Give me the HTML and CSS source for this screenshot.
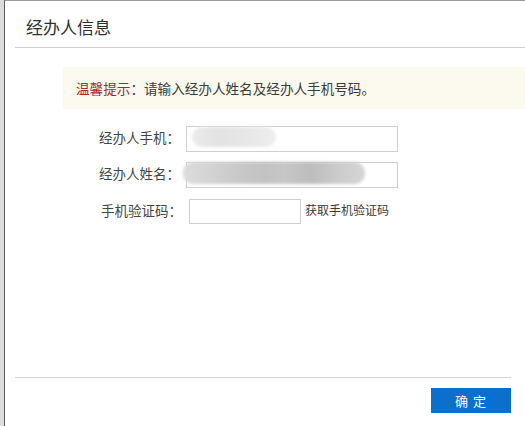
FILE: index.html
```html
<!DOCTYPE html>
<html lang="zh-CN">
<head>
    <meta charset="UTF-8">
    <meta name="viewport" content="width=device-width, initial-scale=1.0">
    <title>经办人信息</title>
    <link rel="stylesheet" href="styles.css">
</head>
<body>
    <!-- Dialog -->
    <div class="dialog">
        <div class="dialog-head">
            <h2>经办人信息</h2>
        </div>

        <div class="dialog-body">
            <!-- Notice -->
            <div class="tip">
                <span class="tip-title">温馨提示</span><span class="colon">：</span>请输入经办人姓名及经办人手机号码。
            </div>

            <!-- Form rows -->
            <div class="form">
                <div class="row">
                    <label>经办人手机<span class="colon">：</span></label>
                    <div class="field wide">
                        <input type="text">
                        <span class="mask mask-phone"></span>
                    </div>
                </div>
                <div class="row">
                    <label>经办人姓名<span class="colon">：</span></label>
                    <div class="field wide">
                        <input type="text">
                        <span class="mask mask-name"></span>
                    </div>
                </div>
                <div class="row row-code">
                    <label>手机验证码<span class="colon">：</span></label>
                    <div class="field short">
                        <input type="text">
                    </div>
                    <a class="get-code" href="#">获取手机验证码</a>
                </div>
            </div>
        </div>

        <div class="dialog-foot">
            <button class="btn-ok">确 定</button>
        </div>
    </div>
</body>
</html>
```

FILE: styles.css
```css
html, body {
    margin: 0;
    height: 100%;
}
body {
    font-family: "Noto Sans CJK SC", "Liberation Sans", sans-serif;
    background: #dcdcdc;
    overflow: hidden;
    color: #333;
}
.dialog {
    margin-left: 4px;
    width: 521px;
    height: 100vh;
    box-sizing: border-box;
    background: #fff;
    border-left: 1px solid #5a5a5a;
    border-top: 1px solid #999;
    display: flex;
    flex-direction: column;
}
.dialog-head {
    margin-left: 10px;
    padding: 6px 0 0 11px;
    border-bottom: 1px solid #cfcfcf;
}
.dialog-head h2 {
    margin: 0;
    font-size: 17px;
    font-weight: normal;
    line-height: 40px;
    color: #2e2e2e;
}
.dialog-body {
    flex: 1;
}
.colon {
    font-family: "Noto Sans CJK TC", sans-serif;
}
.tip {
    margin: 19px 0 0 58px;
    padding-left: 13px;
    height: 42px;
    line-height: 42px;
    font-size: 13.6px;
    background: #fcfaef;
    color: #3a3a3a;
    white-space: nowrap;
}
.tip-title {
    color: #a3262a;
}
.form {
    margin-top: 15px;
}
.row {
    display: flex;
    align-items: center;
    height: 26px;
    margin-bottom: 10px;
}
.row label {
    width: 175px;
    text-align: right;
    font-size: 13.5px;
    color: #444;
    margin-right: 6px;
}
.row-code {
    margin-top: 11px;
    height: 25px;
}
.row-code label {
    width: 177px;
    margin-right: 7px;
}
.field {
    position: relative;
    height: 100%;
}
.field input {
    box-sizing: border-box;
    width: 100%;
    height: 100%;
    margin: 0;
    border: 1px solid #cfcfcf;
    background: #fff;
    outline: none;
}
.wide {
    width: 212px;
}
.short {
    width: 112px;
}
.mask {
    position: absolute;
    border-radius: 10px;
    filter: blur(1.5px);
}
.mask-phone {
    left: 6px;
    top: 3px;
    width: 84px;
    height: 20px;
    background: linear-gradient(to right, #ececec 0, #e2e2e2 30%, #e6e6e6 60%, #eeeeee 100%);
}
.mask-name {
    left: -3px;
    top: 2px;
    width: 182px;
    height: 22px;
    background: linear-gradient(to right, #dcdcdc 0, #d3d3d3 15%, #c9c9c9 30%, #c2c2c2 45%, #c7c7c7 55%, #bdbdbd 70%, #cbcbcb 85%, #d6d6d6 100%);
}
.get-code {
    margin-left: 4px;
    font-size: 12px;
    color: #3a3a3a;
    text-decoration: none;
}
.dialog-foot {
    margin: 0 14px 0 10px;
    padding: 10px 0 13px;
    border-top: 1px solid #d4d4d4;
    display: flex;
    justify-content: flex-end;
}
.btn-ok {
    width: 80px;
    height: 25px;
    border: none;
    background: #0c6fcd;
    color: #fff;
    font-family: "Noto Sans CJK SC", sans-serif;
    font-size: 13px;
    letter-spacing: 1px;
    cursor: pointer;
}
```
